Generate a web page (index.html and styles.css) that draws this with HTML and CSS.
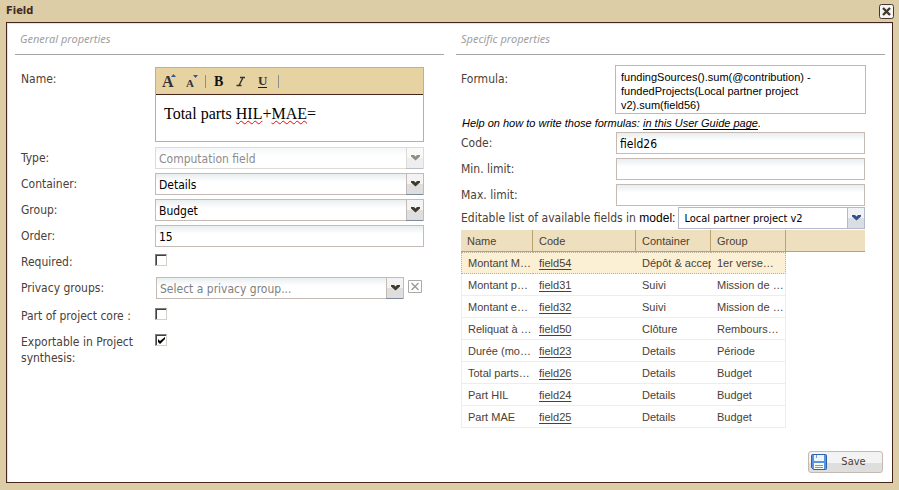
FILE: index.html
```html
<!DOCTYPE html>
<html lang="en">
<head>
<meta charset="utf-8">
<title>Field</title>
<link rel="stylesheet" href="styles.css">
</head>
<body>
<div class="window">
  <header class="titlebar">
    <h1>Field</h1>
    <button class="close" type="button" aria-label="Close">
      <svg width="15" height="15" viewBox="0 0 15 15"><rect x=".5" y=".5" width="14" height="14" rx="2" fill="#f4f4f6" stroke="#46372a"/><path d="M4 4l7 7M11 4l-7 7" stroke="#43382c" stroke-width="2.4"/></svg>
    </button>
  </header>
  <form class="frame">
    <div class="columns">
      <section>
        <h2>General properties</h2>
        <div class="fields">
          <div class="row name-row">
            <label id="name-label">Name:</label>
            <div class="editor">
              <div class="toolbar">
                <button type="button" aria-label="Increase size"><svg width="16" height="16" viewBox="0 0 16 16"><text x="1" y="14" class="glyph big">A</text><path d="M10 4h5l-2.500-3z" fill="#2f56a0"/></svg></button>
                <button type="button" aria-label="Decrease size"><svg width="16" height="16" viewBox="0 0 16 16"><text x="3" y="14" class="glyph small">A</text><path d="M10 2h5l-2.500 3z" fill="#2f56a0"/></svg></button>
                <span class="sep"></span>
                <button type="button" aria-label="Bold"><svg width="16" height="16" viewBox="0 0 16 16"><text x="2" y="13" class="glyph bold">B</text></svg></button>
                <button type="button" aria-label="Italic"><svg width="16" height="16" viewBox="0 0 16 16"><path d="M6 4.500h5M2.500 12.500h5M9 4.500l-4 8" fill="none" stroke="#333" stroke-width="1.400"/></svg></button>
                <button type="button" aria-label="Underline"><svg width="16" height="16" viewBox="0 0 16 16"><text x="2" y="12" class="glyph under">U</text><path d="M2 14.500h9" stroke="#1d1d1d"/></svg></button>
                <span class="sep"></span>
              </div>
              <div class="content" contenteditable="true" spellcheck="false" role="textbox" aria-labelledby="name-label">Total parts <span class="misspelt">HIL</span>+<span class="misspelt">MAE</span>=</div>
            </div>
          </div>
          <div class="row">
            <label for="type">Type:</label>
            <div class="combo disabled"><select id="type" disabled><option>Computation field</option></select><span class="trigger"><svg width="9" height="6" viewBox="0 0 9 6"><path d="M0 0h3l1.500 1.500L6 0h3v1.500L4.500 5.500 0 1.500z"/></svg></span></div>
          </div>
          <div class="row">
            <label for="container">Container:</label>
            <div class="combo"><select id="container"><option>Details</option></select><span class="trigger"><svg width="9" height="6" viewBox="0 0 9 6"><path d="M0 0h3l1.500 1.500L6 0h3v1.500L4.500 5.500 0 1.500z"/></svg></span></div>
          </div>
          <div class="row">
            <label for="group">Group:</label>
            <div class="combo"><select id="group"><option>Budget</option></select><span class="trigger"><svg width="9" height="6" viewBox="0 0 9 6"><path d="M0 0h3l1.500 1.500L6 0h3v1.500L4.500 5.500 0 1.500z"/></svg></span></div>
          </div>
          <div class="row">
            <label for="order">Order:</label>
            <input class="text" id="order" type="text" value="15">
          </div>
          <div class="row">
            <label for="required">Required:</label>
            <span class="tick"><input id="required" type="checkbox"><svg width="7" height="7" viewBox="0 0 7 7"><path d="M0 2v3l2 2 5-5V0L2 4z"/></svg></span>
          </div>
          <div class="row privacy">
            <label for="privacy">Privacy groups:</label>
            <div class="clearable">
              <div class="combo empty"><select id="privacy"><option>Select a privacy group...</option></select><span class="trigger"><svg width="9" height="6" viewBox="0 0 9 6"><path d="M0 0h3l1.500 1.500L6 0h3v1.500L4.500 5.500 0 1.500z"/></svg></span></div>
              <button class="clear" type="button" aria-label="Clear privacy group"><svg width="14" height="13" viewBox="0 0 14 13"><path d="M.5.5h13v12H.5z" fill="#fff" stroke="#aaa"/><path d="M3.500 3l7 7M10.500 3l-7 7" stroke="#999" stroke-width="1.400"/></svg></button>
            </div>
          </div>
          <div class="row">
            <label for="core">Part of project core :</label>
            <span class="tick"><input id="core" type="checkbox"><svg width="7" height="7" viewBox="0 0 7 7"><path d="M0 2v3l2 2 5-5V0L2 4z"/></svg></span>
          </div>
          <div class="row">
            <label for="export">Exportable in Project synthesis:</label>
            <span class="tick"><input id="export" type="checkbox" checked><svg width="7" height="7" viewBox="0 0 7 7"><path d="M0 2v3l2 2 5-5V0L2 4z"/></svg></span>
          </div>
        </div>
      </section>
      <section>
        <h2>Specific properties</h2>
        <div class="fields specific">
          <div class="row formula-row">
            <label for="formula">Formula:</label>
            <textarea id="formula" spellcheck="false">fundingSources().sum(@contribution) - fundedProjects(Local partner project v2).sum(field56)</textarea>
          </div>
          <p class="help">Help on how to write those formulas: <a href="#guide">in this User Guide page</a>.</p>
          <div class="row">
            <label for="code">Code:</label>
            <input class="text" id="code" type="text" value="field26">
          </div>
          <div class="row">
            <label for="min">Min. limit:</label>
            <input class="text" id="min" type="text">
          </div>
          <div class="row">
            <label for="max">Max. limit:</label>
            <input class="text" id="max" type="text">
          </div>
          <div class="model-row">
            <label for="model">Editable list of available fields in <span class="model">model:</span></label>
            <div class="combo blue"><select id="model"><option>Local partner project v2</option></select><span class="trigger"><svg width="9" height="6" viewBox="0 0 9 6"><path d="M0 0h3l1.500 1.500L6 0h3v1.500L4.500 5.500 0 1.500z"/></svg></span></div>
          </div>
          <table>
            <colgroup><col class="c1"><col class="c2"><col class="c3"><col class="c4"><col></colgroup>
            <thead><tr><th>Name</th><th>Code</th><th>Container</th><th>Group</th><td></td></tr></thead>
            <tbody>
              <tr class="selected"><td>Montant M…</td><td><a href="#field54">field54</a></td><td class="clip">Dépôt &amp; accep</td><td>1er verse…</td></tr>
              <tr><td>Montant p…</td><td><a href="#field31">field31</a></td><td>Suivi</td><td>Mission de …</td></tr>
              <tr><td>Montant e…</td><td><a href="#field32">field32</a></td><td>Suivi</td><td>Mission de …</td></tr>
              <tr><td>Reliquat à …</td><td><a href="#field50">field50</a></td><td>Clôture</td><td>Rembours…</td></tr>
              <tr><td>Durée (mo…</td><td><a href="#field23">field23</a></td><td>Details</td><td>Période</td></tr>
              <tr><td>Total parts…</td><td><a href="#field26">field26</a></td><td>Details</td><td>Budget</td></tr>
              <tr><td>Part HIL</td><td><a href="#field24">field24</a></td><td>Details</td><td>Budget</td></tr>
              <tr><td>Part MAE</td><td><a href="#field25">field25</a></td><td>Details</td><td>Budget</td></tr>
            </tbody>
          </table>
        </div>
      </section>
    </div>
    <footer>
      <button class="save" type="button">
        <svg width="16" height="16" viewBox="0 0 16 16"><path d="M1.500.5h13q1 0 1 1v13q0 1-1 1H2.500l-2-2v-12q0-1 1-1z" fill="#5b93dc" stroke="#2b62ae"/><path d="M3 1h10v6H3z" fill="#edf4fd"/><path d="M5 1h1v3H5z" fill="#7f9cc4"/><path d="M3 9h10v6H3z" fill="#f5faf2"/><path d="M4 11h8v1H4zM4 13h8v1H4z" fill="#6fb04f"/></svg>
        <span>Save</span>
      </button>
    </footer>
  </form>
</div>
</body>
</html>
```
FILE: styles.css
```css
* { box-sizing: border-box; }
body {
  margin: 0;
  font: 12px/16px "DejaVu Sans Condensed", "Noto Sans", sans-serif;
  color: #4b4036;
}
button, input, select, textarea { font: inherit; color: inherit; margin: 0; border-radius: 0; }
button { padding: 0; border: 0; background: none; }
svg { display: block; }

.window {
  display: flex;
  flex-direction: column;
  min-height: 100vh;
  padding: 0 6px 7px;
  background: #dccda6;
}
.titlebar { display: flex; justify-content: space-between; align-items: center; height: 22px; }
h1 { margin: 0; font: bold 11px/16px "DejaVu Sans Condensed", "Noto Sans", sans-serif; color: #402a20; }
.titlebar .close { margin-right: -1px; }
.frame {
  flex: 1;
  display: flex;
  flex-direction: column;
  border: 1px solid #46241c;
  background: #fff;
  box-shadow: inset 1px 1px #eae2de;
}
.columns { flex: 1; display: grid; grid-template-columns: 1fr 1fr; gap: 12px; padding: 0 7px 0 8px; }
section { min-width: 0; }
h2 {
  margin: 0;
  height: 32px;
  padding: 8px 5px 0;
  border-bottom: 1px solid #a5a5a5;
  font: italic 11px/16px "Noto Sans", sans-serif;
  color: #a0a0a0;
}
.fields { display: flex; flex-direction: column; gap: 4px; padding: 12px 20px 0 5px; }
.row { display: grid; grid-template-columns: 135px 1fr; min-height: 22px; align-items: start; }
.row > label { padding: 3px 16px 0 1px; }
.name-row { margin-bottom: 1px; }
.name-row > label { padding-top: 4px; }
.privacy { margin-bottom: 2px; }

.editor { border: 1px solid #c8af7c; }
.toolbar { display: flex; align-items: center; gap: 6px; height: 27px; padding: 0 5px; background: #e7d2a2; border-bottom: 1px solid #46241c; }
.sep { width: 1px; height: 13px; background: #8e8e8e; }
.glyph { font-family: "Liberation Serif", serif; font-weight: bold; fill: #333; }
.big { font-size: 16px; }
.small { font-size: 11px; }
.bold { font-size: 14px; fill: #111; }
.under { font-size: 13px; }
.content { height: 46px; padding: 9px 8px; font: 16px/19px "Liberation Serif", serif; color: #000; outline: 0; }
.misspelt { text-decoration: underline wavy #f00 1px; text-underline-offset: 1px; }

.text, .combo {
  width: 100%;
  height: 22px;
  border: 1px solid #c5bbb4;
  background: linear-gradient(#e9eeef, #fff 8px);
  color: #000;
}
.text { padding: 2px 3px 0; }
.combo { position: relative; display: flex; }
.combo select {
  width: 100%;
  padding: 2px 20px 0 3px;
  border: 0;
  background: none;
  appearance: none;
  opacity: 1;
}
.trigger {
  position: absolute;
  inset: 0 0 0 auto;
  width: 17px;
  display: grid;
  place-items: center;
  border-left: 1px solid #c5bbb4;
  background: linear-gradient(#f3f3f3 50%, #dedede 50%);
  box-shadow: 0 1px #7e8b9b;
  fill: #43382c;
  pointer-events: none;
}
.disabled { border-color: #dedad5; color: #8c8c8c; background: linear-gradient(#f4f6f7, #fff 8px); }
.disabled .trigger { border-color: #dedad5; background: linear-gradient(#f9f9f9 50%, #eee 50%); box-shadow: 0 1px #b9c0ca; fill: #938c82; }
.empty { color: #808080; }
.clearable { display: flex; gap: 4px; align-items: flex-start; padding: 0 2px 0 1px; }
.clear { margin-top: 3px; }

.tick { position: relative; display: block; width: 13px; height: 13px; margin-top: 3px; }
.tick input {
  display: block;
  width: 12px;
  height: 12px;
  appearance: none;
  background: #fff;
  border: 1px solid;
  border-color: #808080 #d4d0c8 #d4d0c8 #808080;
  box-shadow: inset 1px 1px #404040;
}
.tick svg { display: none; position: absolute; left: 3px; top: 3px; pointer-events: none; }
.tick input:checked + svg { display: block; }

.specific .row { grid-template-columns: 155px 1fr; }
.specific .row > label { padding-left: 0; }
.specific .formula-row { margin: -2px -1px 0 0; grid-template-columns: 154px 1fr; }
.specific .formula-row > label { padding-top: 6px; }
textarea {
  display: block;
  width: 100%;
  height: 49px;
  padding: 4px 5px;
  border: 1px solid #a3bde3;
  background: #fff;
  font: 11px/14px "Liberation Sans", sans-serif;
  color: #000;
  resize: none;
  overflow: hidden;
  outline: 0;
}
.help { margin: -3px 0 -3px 1px; font: italic 11px/16px "Liberation Sans", sans-serif; color: #000; }
.help a { color: inherit; text-underline-offset: 2px; }
.model-row { display: flex; align-items: center; gap: 3px; margin-top: -3px; white-space: nowrap; }
.model { color: #000; font-family: "Liberation Sans", sans-serif; }
.model-row .combo { flex: 1; min-width: 0; }
.model-row select { font-size: 11px; padding-left: 5px; }
.blue { border-color: #b5b8c8; background: #fff; }
.blue .trigger { border-color: #b5b8c8; background: linear-gradient(#f0f2f5 50%, #d9dde4 50%); fill: #35518c; box-shadow: none; }

table {
  width: 100%;
  margin-top: -3px;
  table-layout: fixed;
  border-spacing: 0;
  font: 11px/16px "Liberation Sans", sans-serif;
}
.c1 { width: 72px; }
.c2 { width: 103px; }
.c3 { width: 75px; }
.c4 { width: 75px; }
th, td { height: 22px; padding: 0 1px 0 6px; text-align: left; font-weight: normal; white-space: nowrap; overflow: hidden; text-overflow: ellipsis; }
thead { background: #eee0bf; }
thead th, thead td { border-bottom: 1px solid #b8a26e; }
thead th { border-right: 1px solid #b8a26e; }
tbody td { border-bottom: 1px solid #ededed; }
tbody td:first-child { border-left: 1px solid #ededed; }
tbody td:last-child { border-right: 1px solid #ededed; }
tbody .clip { padding-right: 0; text-overflow: clip; }
.selected td { background: #fbf0d4; border-top: 1px dotted #b9b1a0; border-bottom: 1px dotted #b9b1a0; }
.selected td:first-child { border-left: 1px dotted #b9b1a0; }
.selected td:last-child { border-right: 1px dotted #b9b1a0; }
td a { color: inherit; text-underline-offset: 2px; }

footer { display: flex; justify-content: flex-end; padding: 0 9px 9px; }
.save {
  display: flex;
  align-items: center;
  width: 75px;
  height: 22px;
  padding: 0 2px;
  border: 1px solid #c5bab2;
  border-radius: 3px;
  background: linear-gradient(#f3f3f3 55%, #dedede 55%);
  font: 11px/16px "DejaVu Sans Condensed", "Noto Sans", sans-serif;
}
.save span { flex: 1; text-align: center; }
```
